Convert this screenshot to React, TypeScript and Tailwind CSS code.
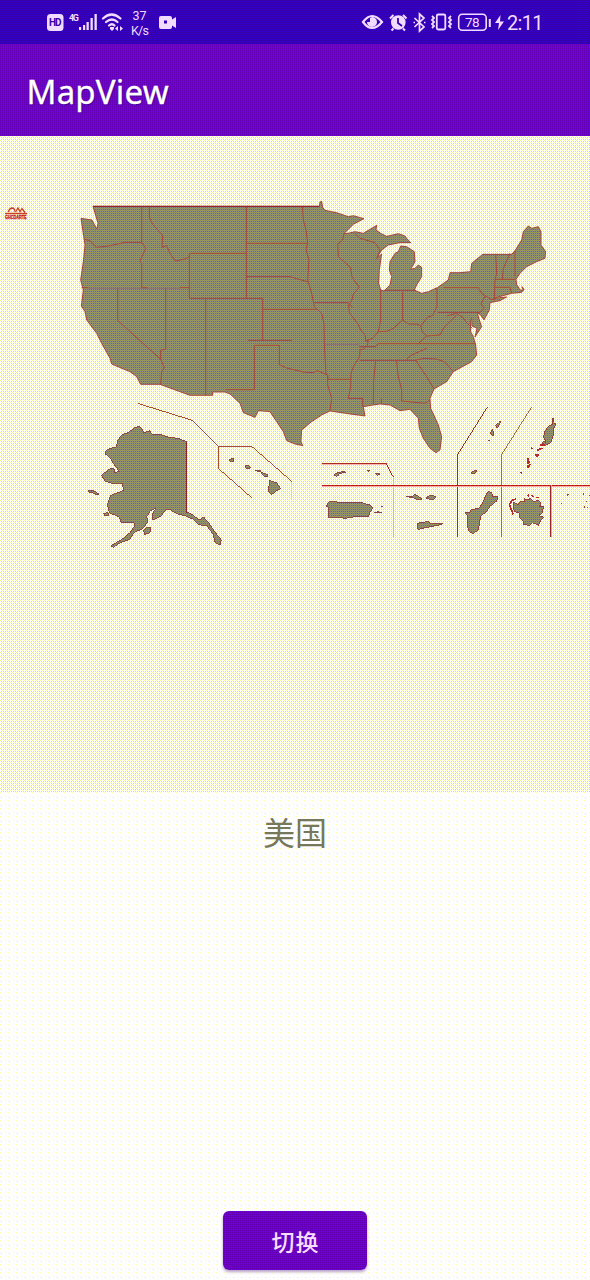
import React from "react";

const LAND =
  "M69,49 H748 L750,36 L755,34 L758,52 L765,61 L800,68 L835,80 L850,77 L882,86 L850,103 L822,131 L838,129 L855,125 L880,130 L900,118 L920,106 L918,120 L932,130 L950,139 L985,131 L1005,138 L1010,145 L1022,158 L990,158 L955,165 L935,180 L920,205 L935,192 L928,240 L926,280 L932,300 L942,303 L960,285 L965,260 L958,240 L960,215 L975,190 L985,185 L992,168 L1010,170 L1033,185 L1035,215 L1022,238 L1035,235 L1045,225 L1055,232 L1055,260 L1040,285 L1033,300 L1055,310 L1075,305 L1102,293 L1135,270 L1140,248 L1170,248 L1202,245 L1205,220 L1238,193 H1325 L1335,182 L1355,150 L1360,125 L1375,108 L1385,115 L1405,110 L1413,125 V165 L1427,185 L1425,205 L1400,215 L1370,230 L1350,250 L1338,268 L1340,283 L1350,300 L1360,301 L1356,290 L1362,298 L1355,307 L1325,310 L1270,325 L1310,321 L1290,332 L1260,338 L1258,360 L1242,390 L1232,375 L1222,368 L1228,390 L1235,410 L1215,441 L1221,415 L1206,408 L1205,385 L1202,392 V425 L1210,440 L1217,465 L1220,495 L1205,515 L1150,545 L1130,575 L1092,597 L1080,625 L1082,655 L1090,672 L1105,705 L1115,740 L1110,780 L1098,788 L1080,775 L1060,745 L1048,715 L1045,685 L1020,658 L990,662 L960,645 L930,642 L910,645 L880,650 L885,678 L840,672 L780,663 L755,675 L725,695 L695,720 L693,755 L698,767 L675,762 L650,752 L640,725 L620,695 L600,665 L565,662 L555,682 L520,668 L510,640 L480,612 L465,606 H428 V616 H360 L270,583 L212,583 L200,560 L180,545 L160,537 L125,522 L120,505 L95,460 L80,430 L50,390 L45,365 L34,348 L40,300 L32,270 L40,215 L45,165 L33,85 L66,90 L80,117 L84,100 Z";

const BORDERS = [
  "M44,148 L60,152 L80,172 L115,168 L165,157 H215 M215,50 V157 L227,175 L209,215 L215,220 V293 H232 M35,293 H55 M238,50 V82 L248,103 L278,136 L276,172 L290,167 L300,190 L316,213 L345,207 L358,200",
  "M358,190 H529 M358,190 V325 H578 M330,293 H358 M287,295 V478 L272,480 V508 L283,533 L275,545 L272,583 M143,295 V391 L272,508 M407,325 V616",
  "M529,49 V325 M529,160 H712 M529,260 H660 L680,266 L712,275 M697,49 L700,90 L708,120 L713,160 L708,178 L717,210 L713,270 L725,310 L733,350 L755,370 L762,400 L763,463 L768,553",
  "M578,325 V451 M578,358 H740 M534,451 H666 M554,466 H628 V524 L650,534 L700,546 L730,548 L742,542 L773,555 V568 H842 M553,466 V599 H466 M773,555 V585 L785,625 L780,663",
  "M733,338 H835 L848,352 M822,131 L818,150 L803,163 L805,200 L842,233 L846,262 L868,292 L850,312 L846,330 L836,345 L838,368 L864,402 L872,420 L886,436 L887,455 L895,448 L892,467 L880,478 H870 L869,500 L850,530 L843,550 L842,590 L835,625 H878 V650",
  "M855,130 L870,145 L915,158 L930,180 L921,205 M932,300 V390 L925,425 L908,445 L888,452 M942,301 H1035 M998,305 V390 L970,415 L950,424 L925,425 M998,390 L1015,402 L1040,402 L1053,408 L1072,382 L1088,376 L1101,350 V293",
  "M868,470 H915 L925,461 H1218 M869,511 H1037 M1010,508 L1025,495 L1070,475 M1035,511 L1062,505 L1098,507 L1123,515 L1150,545 M1037,511 L1070,560 L1092,597",
  "M917,512 L911,570 L910,642 M980,512 L984,555 L995,600 V633 L1065,640 L1080,630 M934,642 V625",
  "M1120,293 H1225 L1235,310 L1246,317 L1233,342 L1243,355 L1230,367 H1103 M1053,408 L1056,425 L1070,438 L1045,461 M1070,438 L1110,435 L1122,412 L1160,375 M1130,378 L1160,370 L1180,384 L1187,395 L1207,415",
  "M1277,193 L1280,250 L1275,270 L1273,325 M1320,190 L1300,235 L1297,268 H1338 M1278,268 H1300 M1275,292 H1320 L1325,310 M1335,182 V260 M1246,317 L1260,327 L1275,330",
];

const FAINT_BORDERS = "M55,295 H330 M763,463 H868";

const ALASKA =
  "M77,152 L91,145 L108,142 L114,120 L125,104 L145,98 L163,84 L177,79 L188,88 L190,98 L211,92 L215,103 L240,103 L270,113 L297,115 L320,126 V336 L340,346 L358,360 L370,350 L390,374 L402,393 L424,420 L420,435 L404,426 L400,403 L381,378 L355,374 L340,358 L315,347 L294,342 L270,329 L257,329 L243,348 L218,360 V340 L229,323 L211,333 L200,350 L203,365 L190,385 L163,397 L148,419 L120,428 L101,442 L92,438 L130,415 L150,398 L163,380 V368 L122,366 L118,350 L89,340 L82,315 L92,286 L130,272 L128,251 L100,252 L76,243 L64,226 L90,206 L103,206 V217 L120,215 L108,202 L88,170 L75,162 Z";

/** Two-pixel dither whose scale undoes the one of the groups that use it. */
function LandPattern({ id }: { id: string }) {
  return (
    <pattern
      id={id}
      width="2"
      height="2"
      patternUnits="userSpaceOnUse"
      patternTransform="scale(3)"
    >
      <rect width="2" height="2" fill="#999966" />
      <rect width="1" height="1" fill="#94944f" />
      <rect x="1" y="1" width="1" height="1" fill="#666699" />
      <rect y="1" width="1" height="1" fill="#8c8c8c" />
    </pattern>
  );
}

function TerritoryMap() {
  return (
    <svg
      viewBox="0 0 590 656"
      className="block h-[656px] w-full"
      shapeRendering="crispEdges"
      role="img"
    >
      <defs>
        <LandPattern id="land" />
      </defs>
      <g transform="translate(0,-136)">
        <g
          transform="translate(70,190) scale(0.33333)"
          stroke="#a8483c"
          strokeWidth="3"
          strokeLinejoin="round"
        >
          <path d={LAND} fill="url(#land)" />
          <path d={FAINT_BORDERS} fill="none" stroke="#94706c" />
          {BORDERS.map((d, i) => (
            <path key={i} d={d} fill="none" />
          ))}
          <path d="M69,49 H748" stroke="#9a1f20" />
        </g>

        <g
          transform="translate(80,400) scale(0.33333)"
          stroke="#8b4a48"
          strokeWidth="3"
          fill="url(#land)"
        >
          <path d={ALASKA} />
          <path d="M320,126 V338" stroke="#902020" />
          <path d="M27,270 L40,271 L56,282 L48,284 L38,278 L27,276 Z M70,341 L84,338 L86,347 L76,348 Z M190,392 L199,382 L213,383 L210,397 L195,404 Z" />
          <path d="M173,10 L337,61 L415,139 H515 L636,245 M415,139 V205 L516,294" fill="none" stroke="#a8502e" />
        </g>

        <g
          transform="translate(180,380) scale(0.33333)"
          stroke="#8b4a48"
          strokeWidth="3"
          fill="url(#land)"
        >
          <path d="M146,239 L160,235 L161,244 L153,246 Z M194,257 L203,255 L212,262 L205,267 L197,264 Z M224,271 L242,272 L239,276 Z M244,278 L252,280 L264,284 L262,291 L251,289 Z M268,302 L290,308 L302,326 L287,334 L275,344 L266,336 Z" />
          <path d="M336,305 V357" stroke="#f8c8a8" />
        </g>

        <g
          transform="translate(310,400) scale(0.33333)"
          stroke="#8b4a48"
          strokeWidth="3"
          fill="url(#land)"
        >
          <path d="M37,193 H228" stroke="#ffb8a8" />
          <path d="M37,190 H228 L250,231" fill="none" stroke="#a82928" />
          <path d="M250,234 V410" stroke="#e5b0a0" />
          <path d="M57,306 L75,304 L84,308 L155,308 L180,315 L190,324 L181,334 L176,348 L155,351 L140,349 L105,355 L80,351 L55,354 L57,323 L49,318 Z" />
          <path d="M73,223 L82,219 L92,217 L94,214 L109,217 L90,220 L82,229 L74,227 Z M171,211 L181,212 L176,214 Z M195,220 L210,222 L201,226 Z M192,339 L205,335 L217,339 Z M213,320 L220,321 Z" />
          <path d="M289,290 L309,288 L316,283 L326,290 L337,297 L323,300 L309,293 Z M347,295 L353,290 L363,285 L378,291 L369,299 Z M322,370 L346,366 L356,364 L361,371 L382,371 L400,370 L384,376 L362,380 L324,388 Z" />
        </g>

        <g
          transform="translate(440,400) scale(0.33333)"
          stroke="#97433c"
          strokeWidth="3"
          fill="url(#land)"
        >
          <path d="M142,21 L52,165 V410" fill="none" stroke="#8b3925" />
          <path d="M275,21 L184,165 V410" fill="none" stroke="#a07040" />
          <path d="M-353,259 H450" stroke="#ffb0a0" />
          <path d="M-353,256 H450" stroke="#b81820" />
          <path d="M334,256 V410" stroke="#e8a090" />
          <path d="M331,256 V410" stroke="#9c282d" />
          <path d="M151,98 L157,88 L162,100 L158,109 Z M167,77 L176,68 L183,62 L178,74 L172,84 Z M145,121 H149 M92,219 L105,211 L112,213 L104,220 Z" />
          <path d="M139,281 L147,273 L157,281 L158,290 L173,291 L170,303 L151,318 L137,337 L122,348 L119,368 L114,391 L99,400 L87,394 L82,378 L84,350 L74,338 L89,337 L94,329 L117,325 L129,307 Z" />
          <path d="M337,54 L342,55 L341,67 L347,72 L342,84 L341,101 L333,127 L316,136 L313,131 L305,134 L310,125 L319,127 L311,112 L314,95 L326,77 L339,74 Z" />
          <path d="M220,319 L221,305 L234,315 L240,306 H252 L253,296 L266,300 L271,294 L283,306 L294,300 L304,312 L298,320 L310,319 L308,338 L296,346 L310,352 L301,363 L296,376 L278,368 L270,376 L252,374 L249,364 L237,352 L238,339 L223,334 Z" />
          <path d="M228,297 L216,301 L208,313 L213,327 L220,343 M263,284 L266,290 M274,285 L281,292 M289,294 L296,291 M290,152 L297,148 L308,144 M286,165 H294 L289,172 M273,142 L278,147 M264,174 V189 L270,184 M261,201 L270,193 L265,204 M241,215 L245,221 M301,135 H314" fill="none" stroke="#b62c2c" strokeWidth="5" />
          <path d="M381,283 h5 M382,287 h3 M363,310 h3 M428,282 h5 M446,287 h4 M438,304 h3 M433,321 h3 M440,322 h3" fill="none" strokeWidth="4" />
        </g>

        <g fill="none" stroke="#c8402c" strokeWidth="1.3" shapeRendering="auto">
          <path d="M5 213.500 H27 M8.500 212 Q9 208.500 12 208 Q15 208 14.500 211.500 M15.500 212 L18 208 L20 211.500 L22 208.500 L25 212.500" />
        </g>
        <text
          x="5"
          y="219"
          fill="#c02020"
          stroke="#c02020"
          strokeWidth=".3"
          textLength="21.5"
          lengthAdjust="spacingAndGlyphs"
          className="font-['Liberation_Sans'] text-[5px] font-bold"
        >
          GHCDARTE
        </text>
      </g>
    </svg>
  );
}

function StatusBar() {
  return (
    <div className="flex h-11 items-center bg-[conic-gradient(#3300cc_25%,#3300a4_0_50%,#3300cc_0_75%,#3600a4_0)] bg-[length:2px_2px] pt-px pr-[45px] pl-[47px] font-['Roboto','Noto_Sans',sans-serif] text-[#f1dcff]">
      <svg viewBox="47 8 132 30" className="h-[30px] w-[132px]" fill="currentColor">
        <rect x="47" y="14" width="16.5" height="17" rx="3.5" />
        <text x="49" y="26.4" fill="#3700ab" className="text-[10px] font-bold" textLength="12.5">HD</text>
        <text x="69" y="21" className="text-[9px] font-bold" textLength="10">4G</text>
        <path d="M79 27h2.200v3h-2.200z M83 25h2.200v5h-2.200z M86.500 22h2.300v8h-2.300z M90.500 18h2.300v12h-2.300z M94.500 14h2.300v16h-2.300z" />
        <g fill="none" stroke="currentColor" strokeWidth="2.2" strokeLinecap="round">
          <path d="M103 18.5 Q111.500 10.500 120.500 18.500" />
          <path d="M106 22 Q112 17 117.500 22" />
          <path d="M109 25.500 Q112 23 114.500 25.500" />
        </g>
        <path d="M110 27h4v2l-2 2-2-2z M118 26v5l-3-2.500z M120 26v5l3-2.500z" />
        <text x="132.500" y="20" className="text-[12.500px]" textLength="14">37</text>
        <text x="131" y="34.500" className="text-[12.500px]" textLength="18">K/s</text>
        <path fillRule="evenodd" d="M161 16h9q2 0 2 2v1.500l4-2.500v11l-4-2.500v1.500q0 2-2 2h-9q-2 0-2-2v-9q0-2 2-2z M164 20.500v3h3v-3z" />
      </svg>
      <svg viewBox="361 8 184 30" className="ml-auto h-[30px] w-[184px]" fill="none" stroke="currentColor" strokeWidth="1.8">
        <path d="M363 22 Q372 10 382 22 Q372 34 363 22Z" strokeWidth="2.2" />
        <path d="M370 18v4h-3a5 5 0 1 0 5-5z" fill="currentColor" stroke="none" />
        <circle cx="398.300" cy="22.500" r="7.300" fill="currentColor" stroke="none" />
        <path d="M390 18.500l3.500-3.500 M406.500 18.500l-3.500-3.500 M393.500 28.500l-2 2 M403 28.500l2 2" strokeWidth="2" />
        <path d="M398 18v5l4 3" stroke="#3700ab" />
        <path d="M414.500 18l9.500 9-4.500 4V14l4.500 4-9.500 9 M413.500 22.500h1.500 M424 22.500h1.500" strokeWidth="1.700" />
        <rect x="436.800" y="14.500" width="8.500" height="15" rx="1.500" />
        <path d="M432 16l2 2-2 2 2 2-2 2 2 2-2 2 M451 16l-2 2 2 2-2 2 2 2-2 2 2 2" strokeWidth="1.800" />
        <rect x="458.700" y="14.300" width="27.500" height="16" rx="3.500" strokeWidth="1.600" />
        <path d="M489.800 19v8" strokeWidth="2" />
        <path d="M500.500 15l-5.500 8h4l-1 7 6-8.500h-4z" fill="currentColor" stroke="none" />
        <g fill="currentColor" stroke="none">
          <text x="465" y="27" className="text-[13.500px]" textLength="14.500">78</text>
          <text x="507" y="30" className="text-[20px]" textLength="36.500">2:11</text>
        </g>
      </svg>
    </div>
  );
}

export default function App() {
  return (
    <main className="flex h-[1280px] w-full flex-col overflow-hidden bg-[#fefefe] bg-[conic-gradient(at_1px_1px,transparent_75%,#ffff99_0),conic-gradient(at_1px_1px,transparent_75%,#ffff99_0),conic-gradient(at_1px_1px,transparent_75%,#ffccff_0)] bg-[length:8px_8px,8px_8px,8px_8px] bg-[position:0_0,5px_4px,1px_5px]">
      <StatusBar />
      <header className="flex h-[92px] items-center bg-[conic-gradient(#6600ff_25%,#6600ff_0_50%,#6600cc_0_75%,#6600ac_0)] bg-[length:2px_2px] pt-[3px] pl-[26.500px]">
        <h1 className="font-['Noto_Sans','Open_Sans',sans-serif] text-[33px] leading-none font-normal tracking-[0.2px] text-white [-webkit-text-stroke:0.3px_white] [text-shadow:1px_1px_1px_#22007799]">
          MapView
        </h1>
      </header>
      <section className="h-[656px] bg-white bg-[conic-gradient(at_1px_1px,transparent_75%,#ffff99_0),conic-gradient(at_1px_1px,transparent_75%,#ffff99_0),conic-gradient(at_1px_1px,transparent_75%,#ccccff_0)] bg-[length:4px_4px,4px_4px,2px_2px] bg-[position:0_0,2px_2px,1px_1px]">
        <TerritoryMap />
      </section>
      <section className="flex flex-1 flex-col items-center justify-between pt-[15px] pb-[10px]">
        <p className="font-['Noto_Sans_CJK_SC',sans-serif] text-[32px] leading-[48px] text-[#77775a]">
          美国
        </p>
        <button className="flex h-[59px] w-[144px] items-center justify-center rounded-md bg-[conic-gradient(#6600cc_25%,#6600ff_0_50%,#6600cc_0_75%,#6600ac_0)] bg-[length:2px_2px] bg-[position:1px_1px] pt-0.5 pl-px font-['Noto_Sans_CJK_SC',sans-serif] text-[23px] font-medium tracking-[1px] text-[#f8ddff] shadow-[0_2px_3px_#b8a0c8]">
          切换
        </button>
      </section>
    </main>
  );
}
